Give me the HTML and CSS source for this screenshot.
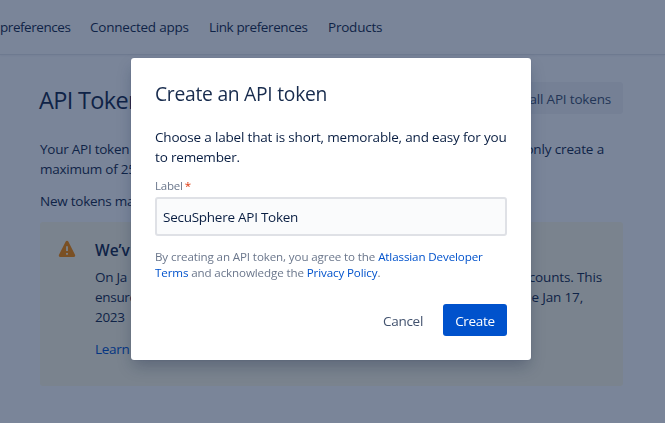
FILE: index.html
```
<!DOCTYPE html>
<html lang="en">
<head>
<meta charset="utf-8">
<title>API Tokens</title>
<link rel="stylesheet" href="styles.css">
</head>
<body>
<nav class="nav">
  <a class="nav-account">preferences</a>
  <a class="nav-apps">Connected apps</a>
  <a class="nav-links">Link preferences</a>
  <a class="nav-products">Products</a>
</nav>
<main class="page">
  <header class="page-header">
    <h1>API Token</h1>
    <button class="revoke">all API tokens</button>
  </header>
  <div class="intro">
    <div class="line"><span>Your API token</span><span class="line-end">only create a</span></div>
    <div class="line"><span>maximum of 25</span></div>
  </div>
  <p class="note">New tokens ma</p>
  <section class="notice">
    <svg class="warning" viewBox="0 0 18 18"><path d="M7.7 1.6 1 14.8C.5 15.8 1 17 2 17h14c1 0 1.5-1.2 1-2.2L10.3 1.6c-.6-1.1-2-1.1-2.6 0Z" fill="#ff8b00"/><path d="M9 6.2v4.8M9 13v1.8" stroke="#fffae6" stroke-width="1.8"/></svg>
    <div class="notice-body">
      <h2>We’v</h2>
      <div class="line"><span>On Ja</span><span class="line-end counts">counts. This</span></div>
      <div class="line"><span>ensure</span><span class="line-end date">e Jan 17,</span></div>
      <div class="line"><span>2023</span></div>
      <a class="learn">Learn</a>
    </div>
  </section>
</main>
<div class="blanket">
  <form class="modal">
    <h2 class="modal-title">Create an API token</h2>
    <p class="modal-text"><span>Choose a label that is short, memorable, and easy for you</span><br>to remember.</p>
    <label class="label" for="name">Label<span class="required">*</span></label>
    <input class="field" id="name" value="SecuSphere API Token">
    <p class="legal">By creating an API token, you agree to the <a>Atlassian Developer<br>Terms</a> and acknowledge the <a>Privacy Policy</a>.</p>
    <div class="actions">
      <button type="button" class="button">Cancel</button>
      <button type="button" class="button primary">Create</button>
    </div>
  </form>
</div>
</body>
</html>
```
FILE: styles.css
```
* { box-sizing: border-box; }
body {
  margin: 0;
  height: 423px;
  overflow: hidden;
  background: #fff;
  color: #172b4d;
  font: 13.5px/20px "Open Sans", "Noto Sans", sans-serif;
  letter-spacing: -.18px;
  white-space: nowrap;
}
h1, h2, p { margin: 0; font-weight: 400; }
button, input { font: inherit; letter-spacing: inherit; }
.nav {
  display: flex;
  gap: 20px;
  height: 54px;
  padding-top: 17px;
  box-shadow: 0 1px 0 #e4e7ec, 0 2px 2px #f2f3f5;
  letter-spacing: -.22px;
}
.nav-account { width: 70px; letter-spacing: -.45px; }
.nav-apps { width: 99px; }
.nav-links { width: 99px; letter-spacing: -.38px; }
.page { width: 583px; margin-left: 40px; padding-top: 28px; }
.page-header { display: flex; justify-content: space-between; }
h1 { margin-left: -1px; font-size: 23.5px; line-height: 36px; letter-spacing: -.65px; }
.revoke {
  width: 150px;
  height: 32px;
  padding: 2px 12px 0;
  border: 0;
  border-radius: 3px;
  background: #f4f5f7;
  color: #42526e;
  text-align: right;
}
.intro { margin-top: 21px; }
.intro, .note { letter-spacing: -.25px; }
.line { display: flex; justify-content: space-between; }
.line-end { margin-right: 19px; letter-spacing: -.15px; }
.counts { margin-right: 0; }
.date { margin-right: 19px; }
.note { margin-top: 12px; }
.notice {
  display: flex;
  gap: 19px;
  height: 164px;
  margin-top: 11px;
  padding: 18px 21px 0 18px;
  border-radius: 3px;
  background: #fffae6;
  letter-spacing: -.3px;
}
.warning { width: 18px; height: 18px; flex: none; }
.notice-body { flex: 1; }
.notice h2 { margin-bottom: 7px; font-size: 15.5px; line-height: 20px; font-weight: 600; letter-spacing: 0; }
.learn { display: block; margin-top: 12px; color: #0052cc; }
.blanket {
  position: fixed;
  inset: 0;
  display: flex;
  justify-content: center;
  align-items: flex-start;
  padding: 58px 3px 0 0;
  background: rgba(9, 30, 66, .54);
}
.modal {
  width: 400px;
  height: 302px;
  padding: 24px;
  border-radius: 3px;
  background: #fff;
  box-shadow: 0 0 1px rgba(9, 30, 66, .31), 0 8px 16px -2px rgba(9, 30, 66, .28);
}
.modal-title { font-size: 19.3px; line-height: 24px; letter-spacing: -.27px; }
.modal-text { margin-top: 21px; color: #091e42; }
.label { display: block; margin-top: 11px; color: #6b778c; font-size: 11.5px; line-height: 16px; font-weight: 500; letter-spacing: -.2px; }
.required { margin-left: 2px; color: #de350b; }
.field {
  display: block;
  width: 352px;
  height: 39px;
  margin-top: 3px;
  padding: 0 6px;
  border: 2px solid #dfe1e6;
  border-radius: 3px;
  background: #fafbfc;
  color: #091e42;
  letter-spacing: -.26px;
}
.legal { margin-top: 13px; color: #6b778c; font-size: 11.6px; line-height: 16px; letter-spacing: -.12px; }
.legal a { color: #0052cc; }
.actions { display: flex; justify-content: flex-end; gap: 8px; margin-top: 23px; }
.button { height: 32px; padding: 2px 12px 0; border: 0; border-radius: 3px; background: none; color: #42526e; letter-spacing: -.3px; }
.primary { width: 64px; background: #0052cc; color: #fff; }
```
